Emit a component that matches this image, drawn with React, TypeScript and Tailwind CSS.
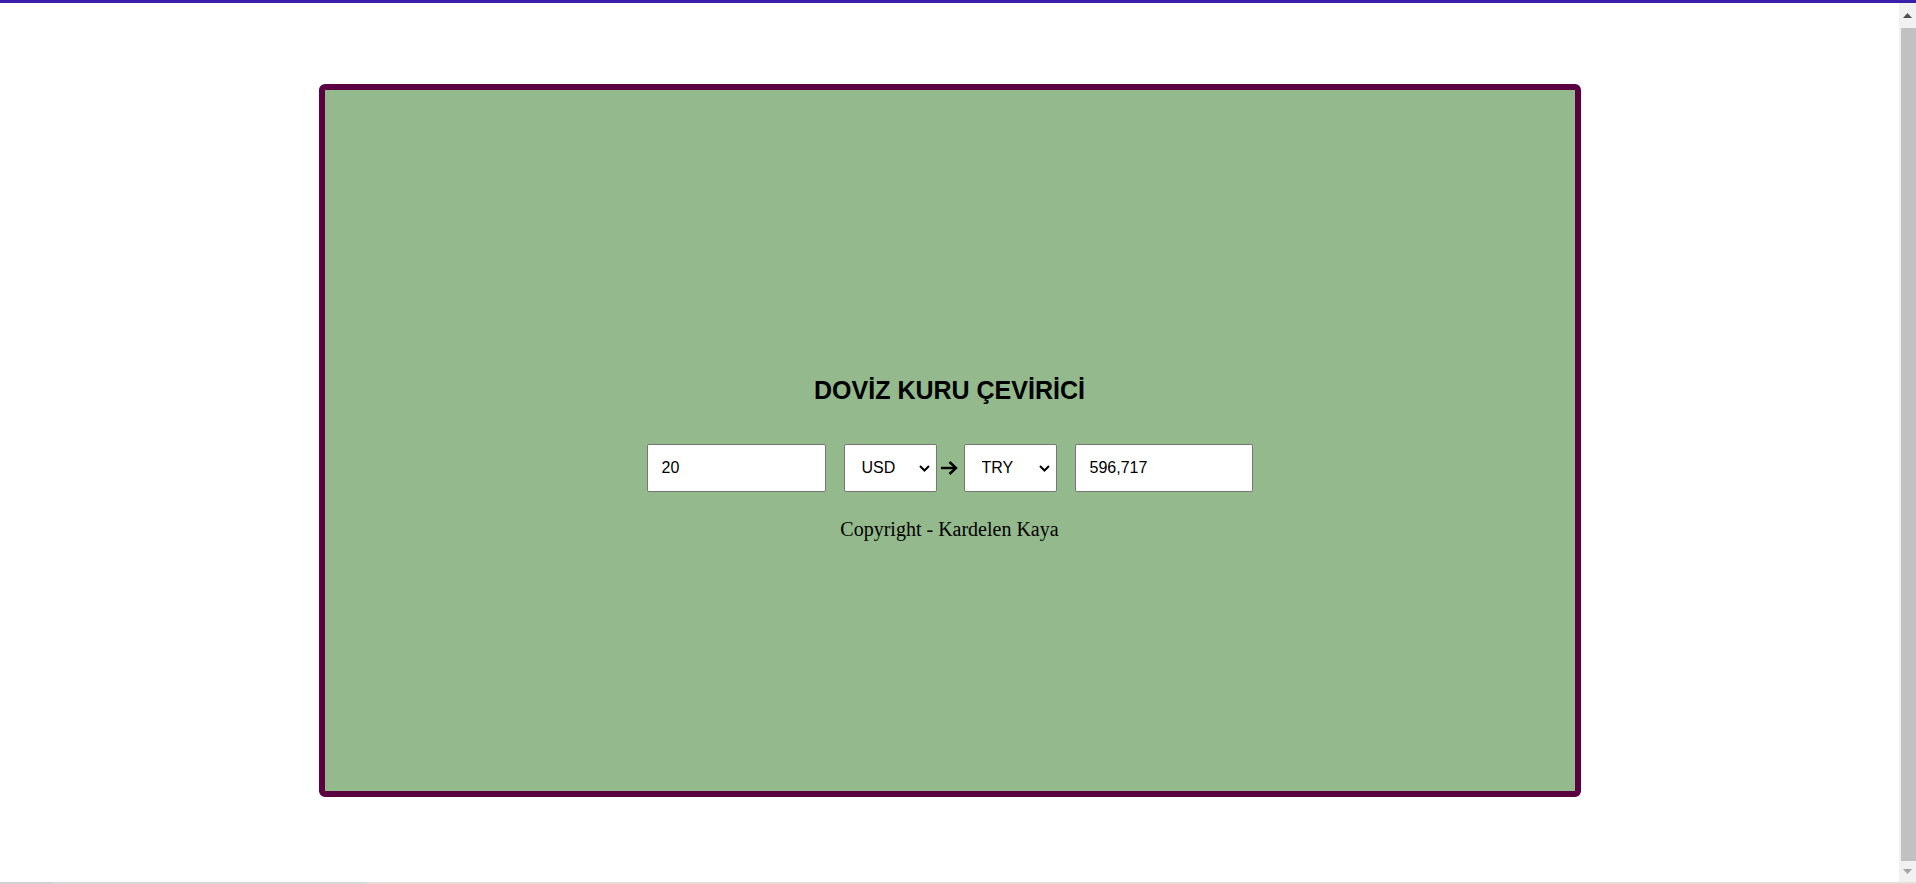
import React from "react";

function Chevron() {
  return (
    <svg width="11" height="7" viewBox="0 0 11 7" className="pointer-events-none absolute right-[7px] top-[21px]">
      <path d="M1 1 L5.5 5.5 L10 1" fill="none" stroke="#000" strokeWidth="2" />
    </svg>
  );
}

function Select({ value }: { value: string }) {
  return (
    <div className="relative h-[48px] w-[93px]">
      <select
        defaultValue={value}
        className="h-full w-full appearance-none rounded-[2px] border border-[#767676] bg-white pl-[17px] text-[16px] text-black outline-none"
        style={{ fontFamily: '"Liberation Sans", Arial, sans-serif' }}
      >
        <option>USD</option>
        <option>TRY</option>
        <option>EUR</option>
      </select>
      <Chevron />
    </div>
  );
}

export default function App() {
  return (
    <div className="flex h-[884px] w-full flex-col overflow-hidden bg-white" style={{ fontFamily: '"Liberation Sans", Arial, sans-serif' }}>
      <div className="h-[3px] w-full bg-[#3a1fab]" />
      <div className="flex flex-1">
        <main className="flex-1">
          <div className="mx-auto mt-[81px] flex h-[713px] w-[1262px] flex-col items-center justify-center rounded-[6px] border-[6px] border-[#5b0040] bg-[#93b98c] pt-[35px]">
            <h2 className="text-[25px] font-bold leading-[29px] text-black">DOVİZ KURU ÇEVİRİCİ</h2>
            <div className="mt-[39px] flex items-center">
              <input
                defaultValue="20"
                className="h-[48px] w-[179px] rounded-[2px] border border-[#767676] bg-white pl-[14px] text-[16px] text-black outline-none"
              />
              <div className="ml-[18px]">
                <Select value="USD" />
              </div>
              <svg width="18" height="14" viewBox="0 0 18 14" className="ml-[3px] mr-[6px]">
                <path d="M1 7 H16" stroke="#000" strokeWidth="2.4" />
                <path d="M9.5 1 L16 7 L9.5 13" fill="none" stroke="#000" strokeWidth="2.4" />
              </svg>
              <Select value="TRY" />
              <input
                defaultValue="596,717"
                className="ml-[18px] h-[48px] w-[178px] rounded-[2px] border border-[#767676] bg-white pl-[14px] text-[16px] text-black outline-none"
              />
            </div>
            <p
              className="mt-[26px] text-[20px] leading-[22px] text-black"
              style={{ fontFamily: '"Liberation Serif", "Times New Roman", serif' }}
            >
              Copyright - Kardelen Kaya
            </p>
          </div>
        </main>
        <div className="flex w-[17px] flex-col bg-[#f1f1f1]">
          <div className="flex h-[25px] items-center justify-center">
            <svg width="9" height="5" viewBox="0 0 9 5">
              <path d="M0 5 L4.5 0 L9 5 Z" fill="#505050" />
            </svg>
          </div>
          <div className="ml-[2px] flex-1 bg-[#c1c1c1]" />
          <div className="flex h-[21px] items-center justify-center">
            <svg width="9" height="5" viewBox="0 0 9 5">
              <path d="M0 0 L4.5 5 L9 0 Z" fill="#a3a3a3" />
            </svg>
          </div>
        </div>
      </div>
      <div className="flex h-[2px] w-full">
        <div className="w-[53px] bg-[#cfcfd4]" />
        <div className="w-[312px] bg-[#d8d8d8]" />
        <div className="flex-1 bg-[#e8dcd4]" />
      </div>
    </div>
  );
}
